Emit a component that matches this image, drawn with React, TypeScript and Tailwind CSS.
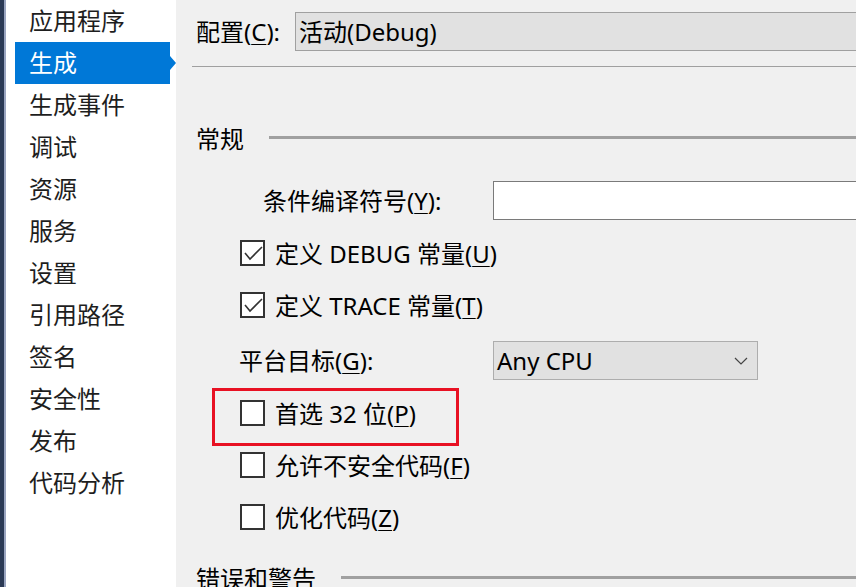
import React from "react";

const navItems = [
  "应用程序",
  "生成",
  "生成事件",
  "调试",
  "资源",
  "服务",
  "设置",
  "引用路径",
  "签名",
  "安全性",
  "发布",
  "代码分析",
];

const Mn = ({ children }: { children: React.ReactNode }) => (
  <span className="underline decoration-1 underline-offset-[3px]">{children}</span>
);

const CheckBox = ({ checked }: { checked?: boolean }) => (
  <div className="w-[25px] h-[26px] border-2 border-[#333333] bg-white shrink-0">
    {checked && (
      <svg width="21" height="22" viewBox="0 0 21 22" className="block">
        <polyline points="3,11 8,17 20,5" fill="none" stroke="#333333" strokeWidth="1.6" />
      </svg>
    )}
  </div>
);

const CheckRow = ({ checked, children }: { checked?: boolean; children: React.ReactNode }) => (
  <div className="flex items-center h-[26px] gap-[10px]">
    <CheckBox checked={checked} />
    <span className="leading-[26px] whitespace-nowrap mt-[2px]">{children}</span>
  </div>
);

const SectionHeader = ({ title, className }: { title: string; className?: string }) => (
  <div className={`flex items-center h-[30px] ${className ?? ""}`}>
    <span className="whitespace-nowrap">{title}</span>
    <div className="flex-1 h-[3px] bg-[#a0a0a0] ml-[25px] mt-[-3px]" />
  </div>
);

export default function App() {
  return (
    <div
      className="flex w-[856px] h-[587px] overflow-hidden text-[24px] text-black"
      style={{ fontFamily: '"Noto Sans", "Noto Sans CJK SC", sans-serif' }}
    >
      <div className="w-[4px] bg-[#2b3a55]" />
      <div className="w-[2px] bg-[#9aa5c0]" />

      {/* sidebar */}
      <nav className="w-[170px] bg-white pl-[9px]">
        {navItems.map((item) => {
          const active = item === "生成";
          return (
            <div key={item} className="relative w-[155px]">
              <div
                className={`h-[42px] pl-[14px] flex items-center whitespace-nowrap ${
                  active ? "bg-[#0078d7] text-white" : "text-[#1e1e1e]"
                }`}
              >
                {item}
              </div>
              {active && (
                <div className="absolute right-[-6px] top-[14px] w-0 h-0 border-y-[7px] border-y-transparent border-l-[6px] border-l-[#0078d7]" />
              )}
            </div>
          );
        })}
      </nav>

      {/* main panel */}
      <main className="flex-1 bg-[#f0f0f0] pl-[20px] overflow-hidden flex flex-col *:shrink-0">
        <div className="flex items-center h-[39px] mt-[12px]">
          <span className="w-[99px] shrink-0 whitespace-nowrap">
            配置(<Mn>C</Mn>):
          </span>
          <div className="w-[700px] shrink-0 h-[39px] bg-[#e1e1e1] border border-[#a0a0a0] pl-[3px] flex items-center whitespace-nowrap">
            活动(Debug)
          </div>
        </div>

        <div className="h-px bg-[#a0a0a0] mt-[15px] ml-[-4px]" />

        <SectionHeader title="常规" className="mt-[57px]" />

        <div className="flex items-center h-[39px] mt-[27px]">
          <span className="w-[297px] pl-[67px] shrink-0 whitespace-nowrap">
            条件编译符号(<Mn>Y</Mn>):
          </span>
          <div className="w-[600px] shrink-0 h-[39px] bg-white border border-[#7a7a7a]" />
        </div>

        <div className="ml-[44px] mt-[20px]">
          <CheckRow checked>
            定义 DEBUG 常量(<Mn>U</Mn>)
          </CheckRow>
        </div>
        <div className="ml-[44px] mt-[26px]">
          <CheckRow checked>
            定义 TRACE 常量(<Mn>T</Mn>)
          </CheckRow>
        </div>

        <div className="flex items-center h-[39px] mt-[23px]">
          <span className="w-[297px] pl-[43px] shrink-0 whitespace-nowrap">
            平台目标(<Mn>G</Mn>):
          </span>
          <div className="w-[265px] shrink-0 h-[39px] bg-[#e1e1e1] border border-[#adadad] pl-[3px] pr-[9px] flex items-center justify-between whitespace-nowrap">
            <span>Any CPU</span>
            <svg width="14" height="8" viewBox="0 0 14 8">
              <polyline points="1,1 7,7 13,1" fill="none" stroke="#444444" strokeWidth="1.2" />
            </svg>
          </div>
        </div>

        <div className="ml-[16px] mt-[8px] w-[247px] h-[58px] border-[3px] border-[#e81123] pl-[25px] pt-[9px]">
          <CheckRow>
            首选 32 位(<Mn>P</Mn>)
          </CheckRow>
        </div>

        <div className="ml-[44px] mt-[6px]">
          <CheckRow>
            允许不安全代码(<Mn>F</Mn>)
          </CheckRow>
        </div>
        <div className="ml-[44px] mt-[26px]">
          <CheckRow>
            优化代码(<Mn>Z</Mn>)
          </CheckRow>
        </div>

        <SectionHeader title="错误和警告" className="mt-[34px]" />
      </main>
    </div>
  );
}
